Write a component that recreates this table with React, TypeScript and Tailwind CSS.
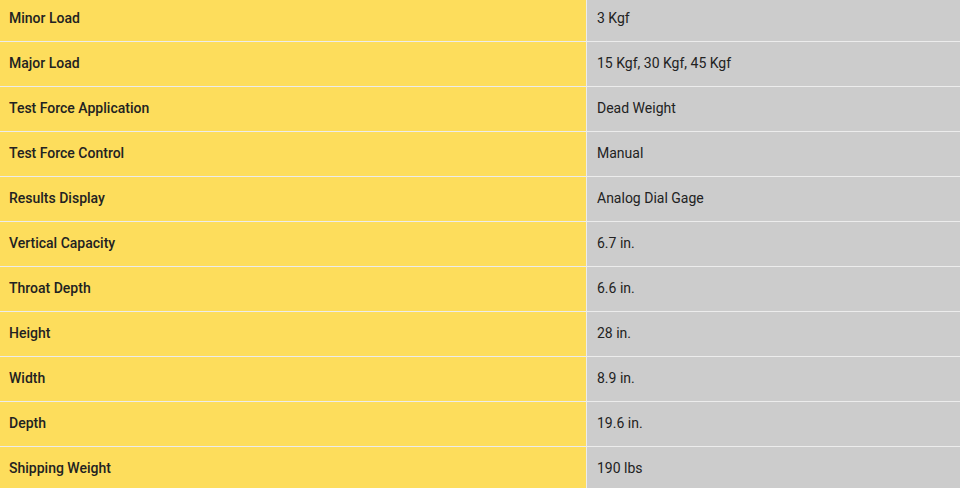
const specs: [string, string][] = [
  ['Minor Load', '3 Kgf'],
  ['Major Load', '15 Kgf, 30 Kgf, 45 Kgf'],
  ['Test Force Application', 'Dead Weight'],
  ['Test Force Control', 'Manual'],
  ['Results Display', 'Analog Dial Gage'],
  ['Vertical Capacity', '6.7 in.'],
  ['Throat Depth', '6.6 in.'],
  ['Height', '28 in.'],
  ['Width', '8.9 in.'],
  ['Depth', '19.6 in.'],
  ['Shipping Weight', '190 lbs'],
];

export default function App() {
  return (
    <div className="w-[960px] h-[488px] overflow-hidden bg-white font-['Roboto',sans-serif] text-[14px] text-[#222]">
      <div className="-mt-[3px] flex flex-col">
        {specs.map(([label, value]) => (
          <div key={label} className="flex h-[45px] border-b border-[#ececec]">
            <div className="w-[587px] flex items-center pl-[9px] pb-[2px] bg-[#fddd5c] border-r border-[#ececec] font-medium">
              {label}
            </div>
            <div className="flex-1 flex items-center pl-[10px] pb-[2px] bg-[#cccccc]">{value}</div>
          </div>
        ))}
      </div>
    </div>
  );
}
